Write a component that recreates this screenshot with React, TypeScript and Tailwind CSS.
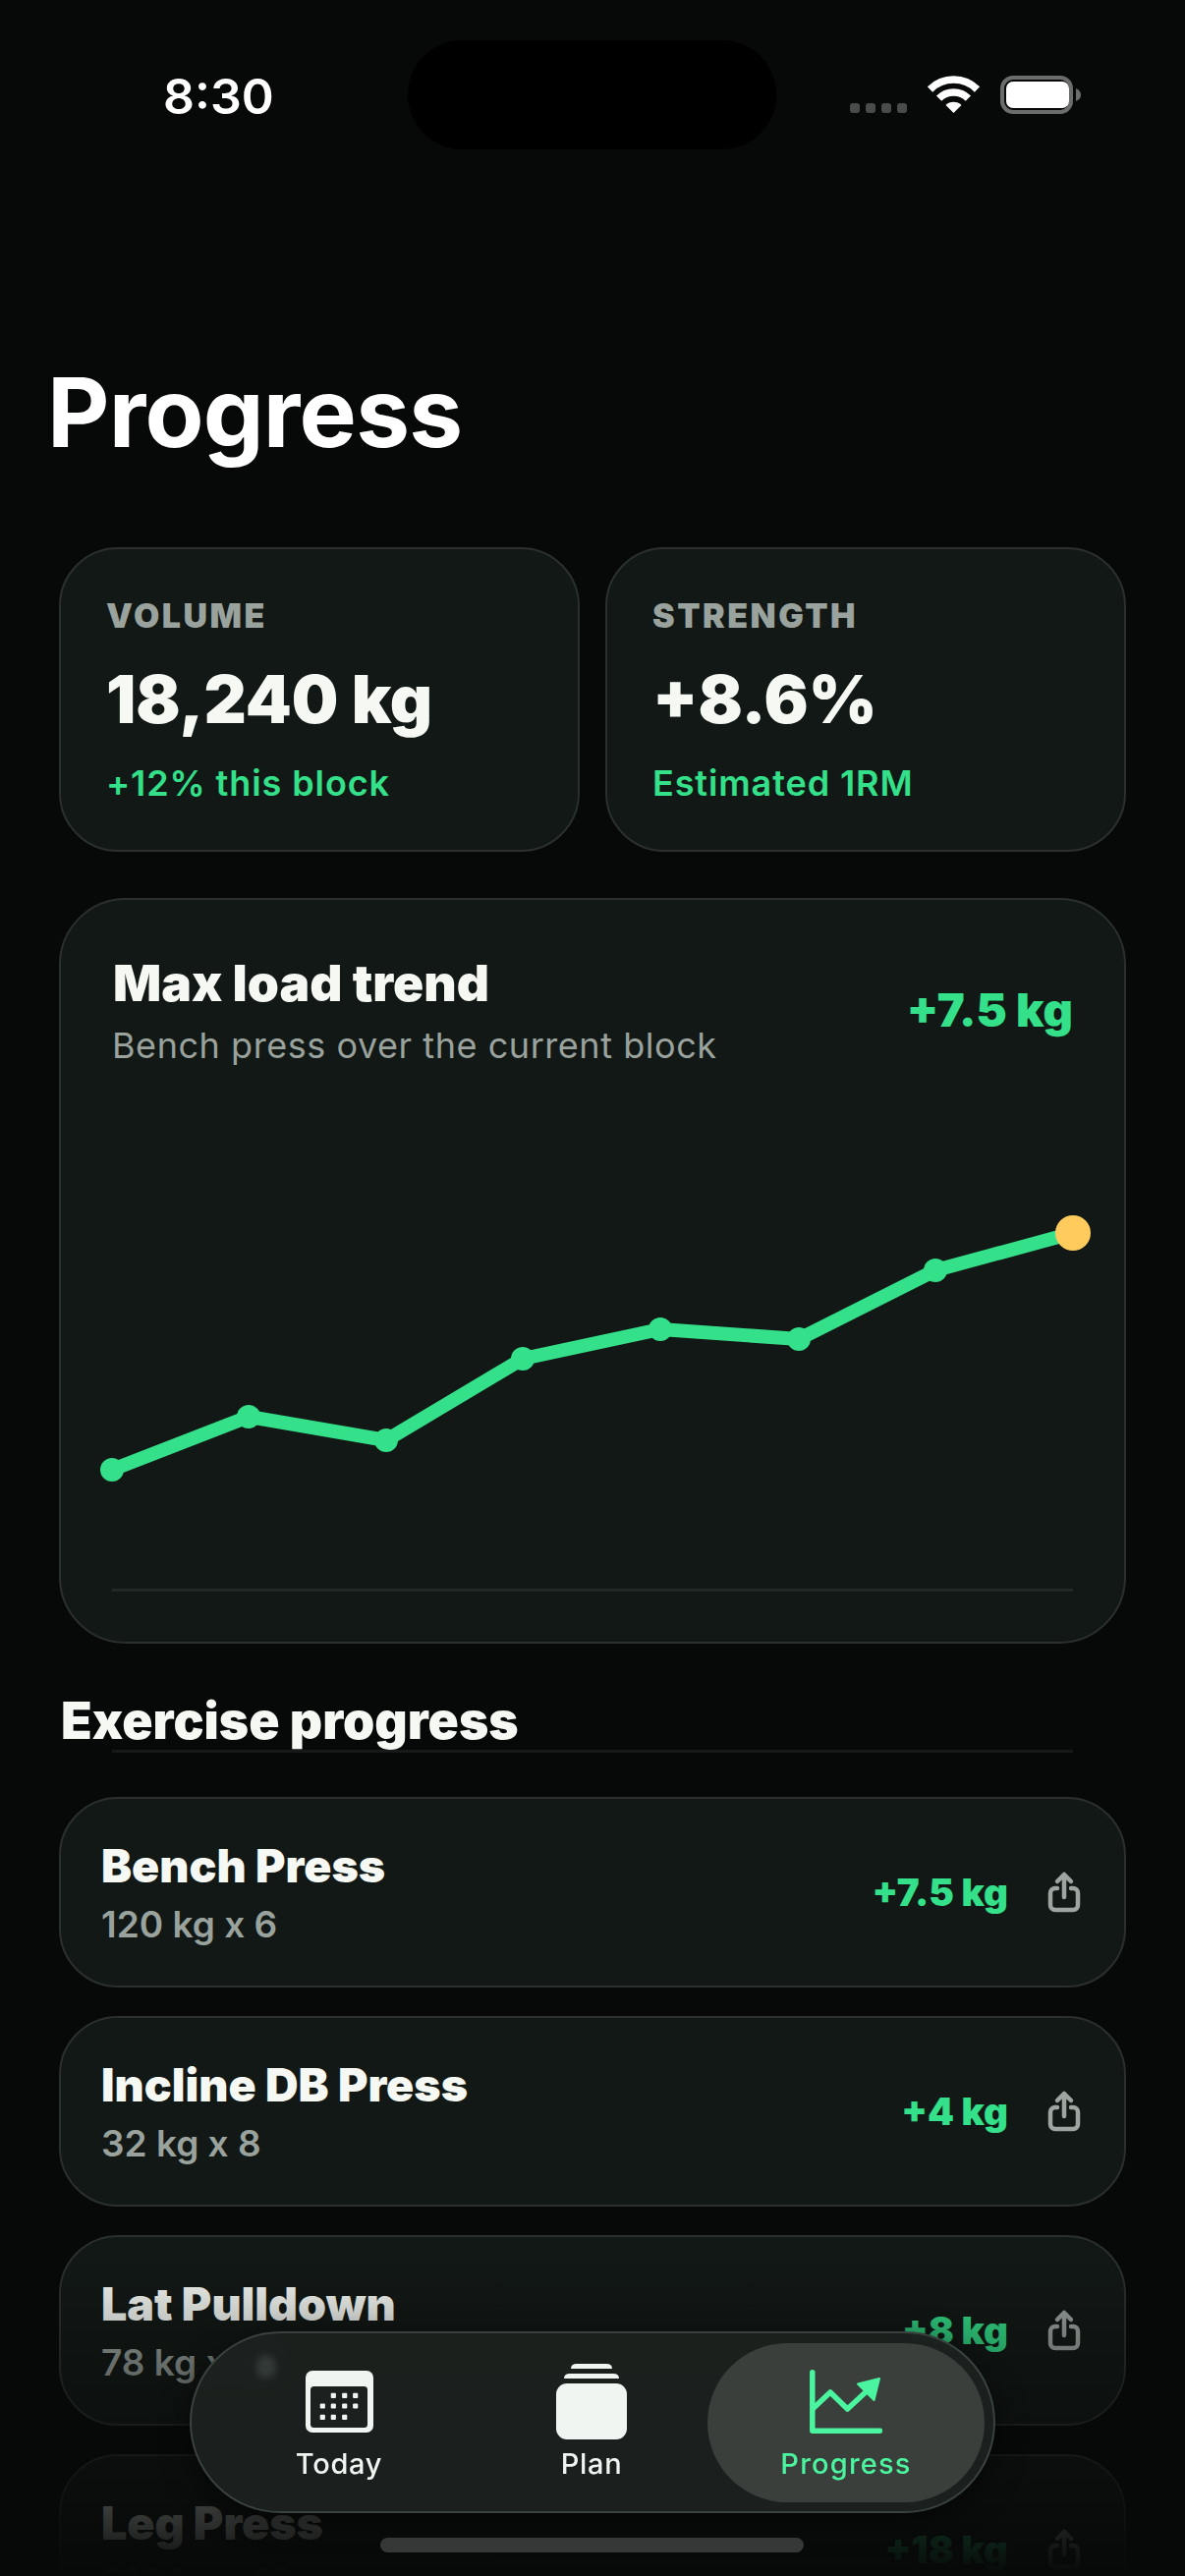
const rows = [
  { name: "Bench Press", detail: "120 kg x 6", delta: "+7.5 kg" },
  { name: "Incline DB Press", detail: "32 kg x 8", delta: "+4 kg" },
  { name: "Lat Pulldown", detail: "78 kg x 10", delta: "+8 kg" },
  { name: "Leg Press", detail: "210 kg x 10", delta: "+18 kg" },
];

const points = [
  [0, 256],
  [139, 202],
  [279, 226],
  [418, 143],
  [558, 113],
  [699, 123],
  [838, 53],
];

const StatusIcons = () => (
  <svg width="236" height="40" viewBox="0 0 236 40" className="mt-[1px]">
    {[0, 16, 32, 48].map((x) => (
      <rect key={x} x={x} y="28" width="10" height="10" rx="3" fill="#484b49" />
    ))}
    <g fill="none" stroke="#fff" strokeWidth="7.5">
      <path d="M81.5 14a34 34 0 0 1 48 0" />
      <path d="M90.6 23.1a21 21 0 0 1 29.8 0" />
    </g>
    <path d="M105.5 38l-8-8a11.3 11.3 0 0 1 16 0z" fill="#fff" />
    <rect x="155" y="2" width="70" height="35" rx="11" fill="none" stroke="#6b6d6c" strokeWidth="4" />
    <rect x="159" y="6" width="64" height="27" rx="7" fill="#fff" />
    <path d="M230 13q5 2 5 6.500t-5 6.500z" fill="#6b6d6c" />
  </svg>
);

const StatCard = ({ label, value, note }: { label: string; value: string; note: string }) => (
  <div className="h-[310px] w-[530px] rounded-[60px] border-2 border-[#2b302d] bg-[#121815] pt-[48px] pr-[40px] pl-[46px]">
    <div className="text-[34px] leading-[40px] font-black tracking-[2.5px] text-[#9aa29d]">{label}</div>
    <div className="mt-[27px] text-[67px] leading-[76px] font-black text-[#f5f8f3]">{value}</div>
    <div className="mt-[26px] text-[36px] leading-[42px] font-semibold tracking-[0.9px] text-[#34e08a]">{note}</div>
  </div>
);

const ShareIcon = () => (
  <svg width="36" height="44" viewBox="0 0 36 44" fill="none" stroke="#9ea5a1" strokeWidth="4.500" strokeLinecap="round" strokeLinejoin="round">
    <path d="M11 18H9a5 5 0 0 0-5 5v12a5 5 0 0 0 5 5h18a5 5 0 0 0 5-5V23a5 5 0 0 0-5-5h-2" />
    <path d="M18 27V4M11 11l7-7 7 7" />
  </svg>
);

const ExerciseRow = ({ name, detail, delta }: { name: string; detail: string; delta: string }) => (
  <div className="flex h-[194px] items-center justify-between rounded-[60px] border-2 border-[#2b302d] bg-[#121815] pr-[43px] pl-[41px]">
    <div>
      <div className="text-[46.500px] leading-[54px] font-black text-[#f5f8f3]">{name}</div>
      <div className="mt-[11px] text-[37px] leading-[44px] font-semibold text-[#9aa29d]">{detail}</div>
    </div>
    <div className="flex items-center gap-[39px]">
      <span className="text-[38.500px] leading-[44px] font-black text-[#34e08a]">{delta}</span>
      <ShareIcon />
    </div>
  </div>
);

const CalendarIcon = () => (
  <svg width="69" height="63" viewBox="0 0 69 63">
    <rect width="69" height="63" rx="7" fill="#f1f5f2" />
    <rect x="5" y="16" width="58" height="42" rx="3.500" fill="#1c211f" />
    {[
      [28.3, 25.3],
      [39.7, 25.3],
      [50.7, 25.3],
      [17.3, 36],
      [28.3, 36],
      [39.7, 36],
      [50.7, 36],
      [17.3, 47.3],
      [28.3, 47.3],
      [39.7, 47.3],
    ].map(([x, y]) => (
      <rect key={`${x}-${y}`} x={x - 2.6} y={y - 2.6} width="5.2" height="5.2" rx="1" fill="#f1f5f2" />
    ))}
  </svg>
);

const PlanIcon = () => (
  <svg width="72" height="77" viewBox="0 0 72 77" fill="#f1f5f2">
    <path d="M15 5q0-5 6-5h30q6 0 6 5z" />
    <path d="M8 15q0-5 6-5h44q6 0 6 5z" />
    <rect y="20" width="72" height="57" rx="11" />
  </svg>
);

const TrendIcon = () => (
  <svg width="74" height="65" viewBox="0 0 74 65" fill="none" stroke="#4bf5a0" strokeWidth="5.500" strokeLinecap="round" strokeLinejoin="round">
    <path d="M2.800 2.800V62.200H71.500" />
    <path d="M4 39l17-16 17.500 17L60 20" />
    <path d="M71 9L49 14.500 65.500 31z" fill="#4bf5a0" strokeWidth="2" />
  </svg>
);

const Tab = ({ label, width, active, children }: { label: string; width: string; active?: boolean; children: React.ReactNode }) => (
  <div className={`flex h-[162px] flex-col items-center rounded-full pt-[21px] ${width} ${active ? "bg-[#3a3f3c] text-[#4bf5a0]" : "text-[#f1f5f2]"}`}>
    <div className="flex h-[78px] items-center justify-center">{children}</div>
    <div className={`mt-[6px] text-[29px] leading-[36px] font-medium ${active ? "tracking-[1.2px]" : "tracking-[0.7px]"}`}>{label}</div>
  </div>
);

export default function App() {
  return (
    <div className="relative h-[2622px] w-[1206px] overflow-hidden bg-[#070908] font-[Inter,'Noto_Sans',sans-serif] text-white">
      <div className="flex h-[152px] pt-[41px]">
        <div className="flex w-[415px] items-center pt-[4px] pl-[166px] text-[50px] font-semibold">8:30</div>
        <div className="h-[111px] w-[375px] rounded-[55px] bg-black" />
        <div className="flex flex-1 items-center pl-[75px]">
          <StatusIcons />
        </div>
      </div>

      <h1 className="mt-[210px] pl-[48px] text-[98px] leading-[116px] font-bold tracking-[-0.8px] text-white">Progress</h1>

      <div className="mt-[79px] flex flex-col px-[60px]">
        <div className="flex gap-[26px]">
          <StatCard label="VOLUME" value="18,240 kg" note="+12% this block" />
          <StatCard label="STRENGTH" value="+8.6%" note="Estimated 1RM" />
        </div>

        <div className="mt-[47px] h-[759px] rounded-[68px] border-2 border-[#2b302d] bg-[#121815] px-[52px] pt-[54px]">
          <div className="flex items-center justify-between">
            <div>
              <div className="pl-[1px] text-[51.500px] leading-[60px] font-black text-[#f5f8f3]">Max load trend</div>
              <div className="mt-[12px] text-[36px] leading-[44px] font-normal tracking-[0.55px] text-[#9aa29d]">Bench press over the current block</div>
            </div>
            <div className="text-[47px] leading-[52px] font-black text-[#34e08a]">+7.5 kg</div>
          </div>

          <svg width="978" height="377" viewBox="0 0 978 377" className="mt-[154px] block overflow-visible">
            <polyline
              points={[...points, [978, 15]].map((p) => p.join(",")).join(" ")}
              fill="none"
              stroke="#34e08a"
              strokeWidth="14"
              strokeLinejoin="round"
            />
            {points.map(([x, y]) => (
              <circle key={x} cx={x} cy={y} r="12" fill="#34e08a" />
            ))}
            <circle cx="978" cy="15" r="18" fill="#ffcb5c" />
          </svg>
          <div className="h-[3px] bg-[#222825]" />
        </div>

        <h2 className="relative z-10 mt-[48px] pl-[2px] text-[51.700px] leading-[60px] font-black text-[#f5f8f3]">Exercise progress</h2>
        <div className="mx-[54px] h-[3px] bg-[#151a18]" />

        <div className="mt-[45px] flex flex-col gap-[29px]">
          {rows.map((row) => (
            <ExerciseRow key={row.name} {...row} />
          ))}
        </div>
      </div>

      <div className="absolute top-[2295px] right-0 bottom-0 left-0 bg-gradient-to-b from-[#07090800] to-[#070908]" />

      <div className="absolute top-[2373px] left-[193px] flex h-[185px] w-[820px] items-center overflow-hidden rounded-full border-2 border-[#39423e] bg-[#1c211f]/95 pl-[11px] shadow-[0_8px_30px_rgba(0,0,0,0.5)] backdrop-blur-md">
        <div className="absolute top-[22px] left-[66px] h-[24px] w-[20px] rounded-full bg-[#333937] blur-[3px]" />
        <Tab label="Today" width="w-[278px]">
          <CalendarIcon />
        </Tab>
        <Tab label="Plan" width="w-[236px]">
          <PlanIcon />
        </Tab>
        <Tab label="Progress" width="w-[282px]" active>
          <TrendIcon />
        </Tab>
      </div>

      <div className="absolute top-[2583px] left-[387px] h-[15px] w-[431px] rounded-full bg-[#363837]" />
    </div>
  );
}
